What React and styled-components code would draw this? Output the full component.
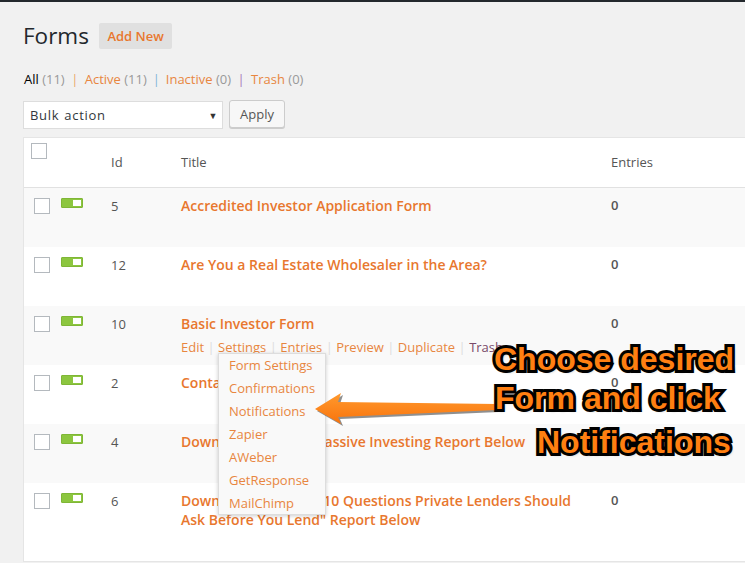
import React from "react";
import styled, { createGlobalStyle } from "styled-components";

const Global = createGlobalStyle`
  html, body { margin: 0; padding: 0; }
  body { background: #f1f1f1; font-family: "Open Sans", "Liberation Sans", sans-serif; overflow: hidden; }
  #root { width: 745px; height: 563px; overflow: hidden; }
`;

const Page = styled.div`
  position: relative;
  width: 745px;
  height: 563px;
  overflow: hidden;
  background: #f1f1f1;
  border-top: 2px solid #23282d;
  box-sizing: border-box;
`;
const Content = styled.div`
  padding: 21px 0 0 23px;
  display: flex;
  flex-direction: column;
  width: 900px;
`;
const Header = styled.div`
  display: flex;
  align-items: center;
  gap: 10px;
  height: 26px;
`;
const Title = styled.h1`
  margin: 0;
  font-size: 22.5px;
  font-weight: 400;
  line-height: 26px;
  color: #23282d;
`;
const AddNew = styled.a`
  display: block;
  height: 26px;
  line-height: 26px;
  padding: 0 8.5px;
  border-radius: 2px;
  background: #e0e0e0;
  color: #e8772e;
  font-size: 13px;
  font-weight: 600;
`;
const Filters = styled.ul`
  list-style: none;
  display: flex;
  margin: 20px 0 0 1px;
  padding: 0;
  font-size: 13px;
  line-height: 20px;
  height: 20px;
  color: #999;
`;
const Filter = styled.li`
  white-space: pre;
  b { font-weight: 400; color: ${p => (p.$current ? "#000" : "#e8863f")}; }
`;
const Sep = styled.span`
  width: ${p => p.$w}px;
  text-align: center;
  color: ${p => p.$c};
`;
const Actions = styled.div`
  display: flex;
  gap: 6px;
  margin-top: 11px;
  height: 29px;
  align-items: flex-start;
`;
const Select = styled.div`
  box-sizing: border-box;
  width: 200px;
  height: 28px;
  margin-top: 1px;
  padding: 0 4px 0 6px;
  background: #fff;
  border: 1px solid #ddd;
  display: flex;
  align-items: center;
  justify-content: space-between;
  font-size: 13px;
  letter-spacing: 0.7px;
  word-spacing: 1px;
  color: #32373c;
  i { font-style: normal; font-size: 9px; color: #333; }
`;
const Apply = styled.button`
  box-sizing: border-box;
  width: 56px;
  height: 28px;
  padding: 0;
  background: #f7f7f7;
  border: 1px solid #ccc;
  border-radius: 3px;
  box-shadow: 0 1px 0 #ccc;
  color: #555;
  font: 400 13px "Open Sans", sans-serif;
`;
const Table = styled.div`
  margin-top: 8px;
  background: #fff;
  border: 1px solid #e5e5e5;
  border-right: 0;
`;
const Row = styled.div`
  box-sizing: border-box;
  display: grid;
  grid-template-columns: 87px 70px 430px 1fr;
  height: ${p => p.$h || 59}px;
  background: ${p => (p.$alt ? "#f9f9f9" : "#fff")};
  font-size: 13px;
`;
const HeadRow = styled(Row)`
  height: 50px;
  border-bottom: 1px solid #e1e1e1;
  align-items: start;
  color: #555;
  line-height: 20px;
  padding-top: 14px;
`;
const Box = styled.span`
  box-sizing: border-box;
  display: block;
  width: 16px;
  height: 16px;
  background: #fff;
  border: 1px solid #b4b9be;
`;
const HeadBox = styled(Box)`
  margin: -9px 0 0 7px;
`;
const Controls = styled.div`
  display: flex;
  align-items: flex-start;
  gap: 11px;
  padding: 10px 0 0 10px;
`;
const Toggle = styled.span`
  box-sizing: border-box;
  display: flex;
  justify-content: flex-end;
  align-items: center;
  width: 22px;
  height: 10px;
  padding: 0 1px;
  background: #8cc63f;
  border: 1px solid #7fb636;
  border-radius: 1px;
  &::after { content: ""; width: 8px; height: 6px; background: #fff; }
`;
const Id = styled.div`
  padding-top: 8px;
  line-height: 20px;
  color: #555;
`;
const NameCell = styled.div`
  padding-top: 8px;
  min-width: 0;
`;
const Name = styled.a`
  display: block;
  width: 400px;
  font-size: 14px;
  font-weight: 600;
  line-height: 19px;
  color: #e8772e;
`;
const RowActions = styled.div`
  display: flex;
  margin-top: 5px;
  font-size: 13px;
  line-height: 18px;
  white-space: pre;
  a { color: #e8863f; }
  a.trash { color: #7a4a6a; }
`;
const ActionSep = styled.span`
  width: 14px;
  text-align: center;
  color: #ddd;
`;
const Count = styled.div`
  padding-top: 7px;
  font-size: 13px;
  font-weight: 600;
  line-height: 20px;
  color: #555;
`;
const Menu = styled.div`
  position: absolute;
  left: 218px;
  top: 351px;
  box-sizing: border-box;
  width: 108px;
  height: 162px;
  padding: 0 0 0 10px;
  background: #f9f9f9;
  border: 1px solid #ddd;
  box-shadow: 0 1px 4px rgba(0,0,0,.2);
  display: flex;
  flex-direction: column;
  font-size: 13px;
  line-height: 23px;
  color: #e8863f;
`;
const Arrow = styled.svg`
  position: absolute;
  left: 310px;
  top: 390px;
`;
const Note = styled.div`
  position: absolute;
  left: ${p => p.$x}px;
  top: ${p => p.$y}px;
  font: 700 32px/36px "Liberation Sans", Arial, sans-serif;
  white-space: nowrap;
  color: #ff7f11;
  -webkit-text-stroke: 6px #000;
  paint-order: stroke fill;
  text-shadow: 2px 2px 3px rgba(0,0,0,.35);
`;

const rows = [
  { id: 5, name: "Accredited Investor Application Form" },
  { id: 12, name: "Are You a Real Estate Wholesaler in the Area?" },
  { id: 10, name: "Basic Investor Form", actions: true },
  { id: 2, name: "Contact Us" },
  { id: 4, name: "Download Our Free Passive Investing Report Below" },
  { id: 6, name: 'Download Your "Top 10 Questions Private Lenders Should Ask Before You Lend" Report Below', h: 78 },
];
const actions = ["Edit", "Settings", "Entries", "Preview", "Duplicate"];
const menu = ["Form Settings", "Confirmations", "Notifications", "Zapier", "AWeber", "GetResponse", "MailChimp"];

export default function App() {
  return (
    <Page>
      <Global />
      <Content>
        <Header>
          <Title>Forms</Title>
          <AddNew>Add New</AddNew>
        </Header>
        <Filters>
          <Filter $current><b>All</b> (11)</Filter><Sep $w={20} $c="#e9a96b">|</Sep>
          <Filter><b>Active</b> (11)</Filter><Sep $w={19} $c="#7fb5d8">|</Sep>
          <Filter><b>Inactive</b> (0)</Filter><Sep $w={20} $c="#a678b8">|</Sep>
          <Filter><b>Trash</b> (0)</Filter>
        </Filters>
        <Actions>
          <Select>Bulk action<i>▼</i></Select>
          <Apply>Apply</Apply>
        </Actions>
        <Table>
          <HeadRow>
            <div><HeadBox /></div>
            <div>Id</div>
            <div>Title</div>
            <div>Entries</div>
          </HeadRow>
          {rows.map((r, i) => (
            <Row key={r.id} $alt={i % 2 === 0} $h={r.h}>
              <Controls><Box /><Toggle /></Controls>
              <Id>{r.id}</Id>
              <NameCell>
                <Name>{r.name}</Name>
                {r.actions && (
                  <RowActions>
                    {actions.map(a => (
                      <React.Fragment key={a}><a>{a}</a><ActionSep>|</ActionSep></React.Fragment>
                    ))}
                    <a className="trash">Trash</a>
                  </RowActions>
                )}
              </NameCell>
              <Count>0</Count>
            </Row>
          ))}
        </Table>
      </Content>
      <Menu>
        {menu.map(m => <span key={m}>{m}</span>)}
      </Menu>
      <Arrow width="190" height="44" viewBox="0 0 190 44">
        <defs>
          <linearGradient id="g" x1="0" y1="0" x2="0" y2="1">
            <stop offset="0" stopColor="#ff9a2e" />
            <stop offset="1" stopColor="#f9730c" />
          </linearGradient>
        </defs>
        <path d="M5 17 L31 1 L28 10 L187 12 L187 18 L28 25 L31 32 Z" fill="#333" opacity=".55" transform="translate(2 2)" />
        <path d="M5 17 L31 1 L28 10 L187 12 L187 18 L28 25 L31 32 Z" fill="url(#g)" />
      </Arrow>
      <Note $x={494} $y={339}>Choose desired</Note>
      <Note $x={495} $y={378}>Form and click</Note>
      <Note $x={537} $y={422}>Notifications</Note>
    </Page>
  );
}
